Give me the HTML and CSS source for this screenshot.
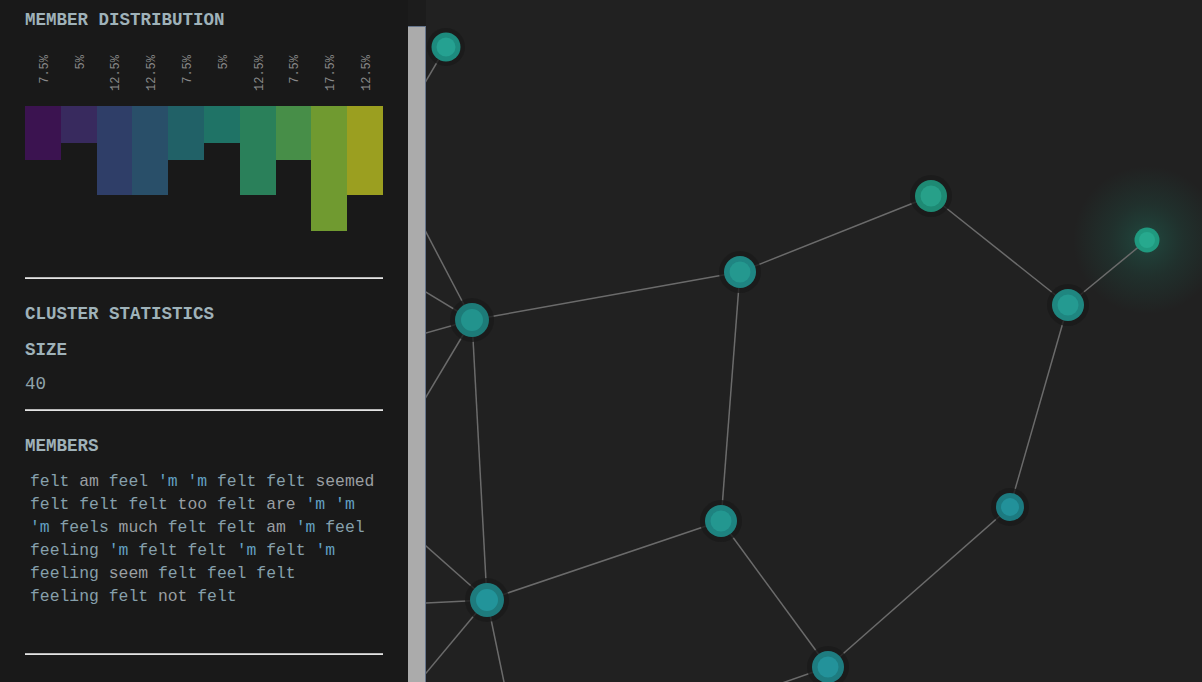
FILE: index.html
```html
<!DOCTYPE html>
<html lang="en">
<head>
<meta charset="utf-8">
<title>Cluster view</title>
<link rel="stylesheet" href="styles.css">
</head>
<body>
<div class="app">
  <aside class="sidebar">
    <div class="panel">
      <h2 class="title">MEMBER DISTRIBUTION</h2>
      <svg class="dist" width="358" height="208" viewBox="0 0 358 208">
        <g class="bars">
          <rect x="0" y="74" width="36" height="54" fill="#3b1350"/>
          <rect x="36" y="74" width="36" height="37" fill="#382a5e"/>
          <rect x="72" y="74" width="35" height="89" fill="#2f3e68"/>
          <rect x="107" y="74" width="36" height="89" fill="#294f69"/>
          <rect x="143" y="74" width="36" height="54" fill="#216167"/>
          <rect x="179" y="74" width="36" height="37" fill="#1f7366"/>
          <rect x="215" y="74" width="36" height="89" fill="#2a805a"/>
          <rect x="251" y="74" width="35" height="54" fill="#478e48"/>
          <rect x="286" y="74" width="36" height="125" fill="#709a30"/>
          <rect x="322" y="74" width="36" height="89" fill="#9b9f20"/>
        </g>
        <g class="pct">
          <text transform="translate(22.5 23) rotate(-90)">7.5%</text>
          <text transform="translate(58.5 23) rotate(-90)">5%</text>
          <text transform="translate(94 23) rotate(-90)">12.5%</text>
          <text transform="translate(129.5 23) rotate(-90)">12.5%</text>
          <text transform="translate(165.5 23) rotate(-90)">7.5%</text>
          <text transform="translate(201.5 23) rotate(-90)">5%</text>
          <text transform="translate(237.5 23) rotate(-90)">12.5%</text>
          <text transform="translate(273 23) rotate(-90)">7.5%</text>
          <text transform="translate(308.5 23) rotate(-90)">17.5%</text>
          <text transform="translate(344.5 23) rotate(-90)">12.5%</text>
        </g>
      </svg>
      <hr class="rule rule-dist">
      <h2 class="title title-stats">CLUSTER STATISTICS</h2>
      <h3 class="title label-size">SIZE</h3>
      <div class="value">40</div>
      <hr class="rule rule-size">
      <h3 class="title label-members">MEMBERS</h3>
      <p class="members"><span class="w1">felt</span> <span class="w2">am</span> <span class="w1">feel</span> <span class="w3">'m</span> <span class="w3">'m</span> <span class="w1">felt</span> <span class="w1">felt</span> <span class="w2">seemed</span><br><span class="w1">felt</span> <span class="w1">felt</span> <span class="w1">felt</span> <span class="w2">too</span> <span class="w1">felt</span> <span class="w2">are</span> <span class="w3">'m</span> <span class="w3">'m</span><br><span class="w3">'m</span> <span class="w1">feels</span> <span class="w2">much</span> <span class="w1">felt</span> <span class="w1">felt</span> <span class="w2">am</span> <span class="w3">'m</span> <span class="w1">feel</span><br><span class="w1">feeling</span> <span class="w3">'m</span> <span class="w1">felt</span> <span class="w1">felt</span> <span class="w3">'m</span> <span class="w1">felt</span> <span class="w3">'m</span><br><span class="w1">feeling</span> <span class="w2">seem</span> <span class="w1">felt</span> <span class="w1">feel</span> <span class="w1">felt</span><br><span class="w1">feeling</span> <span class="w1">felt</span> <span class="w2">not</span> <span class="w1">felt</span></p>
      <hr class="rule rule-members">
    </div>
    <div class="scrollbar"><div class="thumb"></div></div>
  </aside>
  <main class="graph">
    <svg class="network" width="776" height="682" viewBox="0 0 776 682">
      <defs>
        <radialGradient id="glow">
          <stop offset="0" stop-color="#1fa585" stop-opacity="0.3"/>
          <stop offset="0.5" stop-color="#1c8c72" stop-opacity="0.14"/>
          <stop offset="1" stop-color="#1c8c72" stop-opacity="0"/>
        </radialGradient>
      </defs>
      <circle cx="721" cy="240" r="74" fill="url(#glow)"/>
      <g class="edges">
        <line x1="20" y1="47" x2="-30" y2="132"/>
        <line x1="46" y1="320" x2="-20" y2="194"/>
        <line x1="46" y1="320" x2="-60" y2="256"/>
        <line x1="46" y1="320" x2="-60" y2="350"/>
        <line x1="46" y1="320" x2="-40" y2="464"/>
        <line x1="46" y1="320" x2="314" y2="272"/>
        <line x1="46" y1="320" x2="61" y2="600"/>
        <line x1="314" y1="272" x2="505" y2="196"/>
        <line x1="314" y1="272" x2="295" y2="521"/>
        <line x1="505" y1="196" x2="642" y2="305"/>
        <line x1="721" y1="240" x2="642" y2="305"/>
        <line x1="642" y1="305" x2="584" y2="507"/>
        <line x1="584" y1="507" x2="402" y2="667"/>
        <line x1="295" y1="521" x2="402" y2="667"/>
        <line x1="295" y1="521" x2="61" y2="600"/>
        <line x1="61" y1="600" x2="-60" y2="493"/>
        <line x1="61" y1="600" x2="-60" y2="606"/>
        <line x1="61" y1="600" x2="-40" y2="721"/>
        <line x1="61" y1="600" x2="90" y2="740"/>
        <line x1="402" y1="667" x2="316" y2="697"/>
      </g>
      <g class="nodes">
        <g><circle class="halo" cx="20" cy="47" r="19"/><circle cx="20" cy="47" r="14.5" fill="#1d8b7e"/><circle cx="20" cy="47" r="9.5" fill="#25a191"/></g>
        <g><circle class="halo" cx="46" cy="320" r="22"/><circle cx="46" cy="320" r="17" fill="#1d7b78"/><circle cx="46" cy="320" r="11" fill="#22938d"/></g>
        <g><circle class="halo" cx="314" cy="272" r="21"/><circle cx="314" cy="272" r="16" fill="#1f8582"/><circle cx="314" cy="272" r="10.5" fill="#24988f"/></g>
        <g><circle class="halo" cx="505" cy="196" r="21"/><circle cx="505" cy="196" r="16" fill="#1e8a74"/><circle cx="505" cy="196" r="10.5" fill="#27a089"/></g>
        <g><circle cx="721" cy="240" r="12.5" fill="#20997f"/><circle cx="721" cy="240" r="8" fill="#27a98e"/></g>
        <g><circle class="halo" cx="642" cy="305" r="21"/><circle cx="642" cy="305" r="16" fill="#1f8680"/><circle cx="642" cy="305" r="10.5" fill="#249a91"/></g>
        <g><circle class="halo" cx="584" cy="507" r="19"/><circle cx="584" cy="507" r="14" fill="#1c7a80"/><circle cx="584" cy="507" r="9" fill="#22919a"/></g>
        <g><circle class="halo" cx="295" cy="521" r="21"/><circle cx="295" cy="521" r="16" fill="#1e8380"/><circle cx="295" cy="521" r="10.5" fill="#239790"/></g>
        <g><circle class="halo" cx="61" cy="600" r="22"/><circle cx="61" cy="600" r="17" fill="#1e7b7d"/><circle cx="61" cy="600" r="11" fill="#22949a"/></g>
        <g><circle class="halo" cx="402" cy="667" r="21"/><circle cx="402" cy="667" r="16" fill="#1e7c80"/><circle cx="402" cy="667" r="10.5" fill="#23929a"/></g>
      </g>
    </svg>
  </main>
</div>
</body>
</html>
```
FILE: styles.css
```css
* { box-sizing: border-box; }
html, body {
  margin: 0;
  padding: 0;
  height: 100%;
  overflow: hidden;
  background: #212121;
}
.app {
  display: flex;
  height: 682px;
  width: 1202px;
}
.sidebar {
  display: flex;
  flex: 0 0 426px;
  background: #191919;
  height: 682px;
}
.panel {
  width: 408px;
  padding: 10px 25px 0 25px;
  font-family: "Liberation Mono", "DejaVu Sans Mono", monospace;
}
.title {
  margin: 0;
  font-size: 17.5px;
  line-height: 20px;
  font-weight: bold;
  color: #9fb2b9;
}
.dist {
  display: block;
  margin-top: 2px;
}
.pct text {
  font-family: "Liberation Mono", "DejaVu Sans Mono", monospace;
  font-size: 12px;
  fill: #8a8a8a;
  text-anchor: end;
}
.rule {
  margin: 0;
  height: 2px;
  border: 0;
  border-top: 1px solid #b8b8b8;
  border-bottom: 1px solid #e4e4e4;
}
.rule-dist { margin-top: 37px; }
.title-stats { margin-top: 25px; }
.label-size { margin-top: 16px; }
.value {
  margin-top: 14px;
  font-size: 17.5px;
  line-height: 20px;
  color: #8fa3ab;
}
.rule-size { margin-top: 15px; }
.label-members { margin-top: 25px; }
.members {
  margin: 14px 0 0 0;
  padding: 0 5px;
  font-size: 16.4px;
  line-height: 23px;
  color: #8fa3ab;
}
.w1 { color: #86a0ac; }
.w2 { color: #9a9fa2; }
.w3 { color: #62a0c2; }
.rule-members { margin-top: 45px; }
.scrollbar {
  display: flex;
  flex-direction: column;
  width: 18px;
  background: #1c1c1c;
  padding-top: 26px;
}
.thumb {
  flex: 1;
  background: #ababab;
  border-top: 1px solid #66758c;
  border-right: 1px solid #66758c;
}
.graph {
  flex: 1;
  overflow: hidden;
}
.network {
  display: block;
  overflow: hidden;
}
.edges line {
  stroke: #6b6b6b;
  stroke-width: 1.5;
}
.halo {
  fill: #1a1a1a;
  opacity: 0.8;
}
```
